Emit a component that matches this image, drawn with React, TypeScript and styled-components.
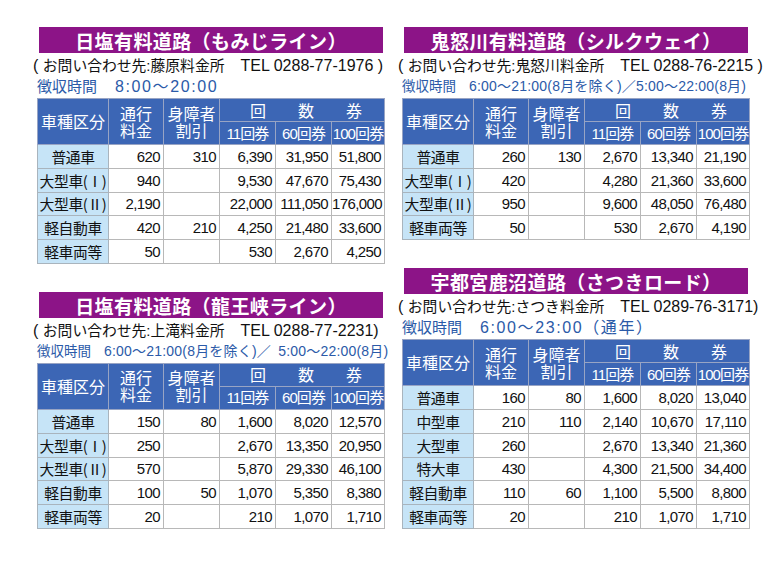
import React from "react";
import styled, { createGlobalStyle } from "styled-components";

const GlobalStyle = createGlobalStyle`
  html, body { margin: 0; padding: 0; background: #ffffff; }
  body {
    font-family: "Liberation Sans", "Noto Sans CJK JP", sans-serif;
    color: #111111;
  }
`;

const Page = styled.div`
  display: flex;
  gap: 18px;
  padding: 27px 0 0 37px;
  width: 780px;
  height: 564px;
  box-sizing: border-box;
`;

const Column = styled.div`
  display: flex;
  flex-direction: column;
  gap: 28px;
  width: 347px;
`;

const Block = styled.section`
  display: flex;
  flex-direction: column;
`;

const Title = styled.h2`
  margin: 0 1px 0 2px;
  height: 26px;
  line-height: 27px;
  background: #8c1487;
  color: #ffffff;
  font-family: "Noto Sans CJK JP", sans-serif;
  font-weight: 700;
  font-size: 19px;
  letter-spacing: 0.4px;
  text-align: center;
  white-space: nowrap;
`;

const Contact = styled.div`
  margin: 2px 0 0 -4px;
  height: 21px;
  line-height: 21px;
  font-size: 16px;
  white-space: nowrap;
  color: #111111;
`;

const Jp = styled.span`
  font-size: 14.8px;
`;

const Hours = styled.div<{ $compact?: boolean }>`
  height: 21px;
  line-height: 21px;
  color: #2b5aa8;
  white-space: nowrap;
  font-size: ${(p) => (p.$compact ? "14px" : "16px")};
  letter-spacing: ${(p) => (p.$compact ? "0.2px" : "1.6px")};
  margin-bottom: 1px;
`;

const HoursLabel = styled.span<{ $compact?: boolean }>`
  font-size: ${(p) => (p.$compact ? "13.5px" : "15px")};
  letter-spacing: 0;
  margin-right: ${(p) => (p.$compact ? "13px" : "18px")};
`;

const Table = styled.table`
  border-collapse: collapse;
  table-layout: fixed;
  width: 347px;
  border: 1px solid #9a9a9a;
`;

const Th = styled.th`
  background: #3c66b5;
  color: #ffffff;
  font-family: "Noto Sans CJK JP", sans-serif;
  font-weight: 400;
  font-size: 16px;
  line-height: 17px;
  border: 1px solid #98a4c4;
  padding: 0;
  height: 22px;
  text-align: center;
  vertical-align: middle;
`;

const SubTh = styled(Th)`
  font-size: 15px;
  height: 22px;
  letter-spacing: -0.9px;
  white-space: nowrap;
  font-family: "Liberation Sans", "Noto Sans CJK JP", sans-serif;
`;

const Spread = styled.div`
  display: flex;
  justify-content: center;
  gap: 32px;
  padding-left: 8px;
`;

const NameCell = styled.td`
  background: #c6e4f7;
  font-family: "Noto Sans CJK JP", sans-serif;
  font-size: 14.8px;
  text-align: center;
  border: 1px solid #a9b4bd;
  height: 22.8px;
  padding: 0;
  white-space: nowrap;
  letter-spacing: -0.4px;
`;

const NumCell = styled.td`
  font-size: 15px;
  letter-spacing: -0.6px;
  text-align: right;
  padding: 0 3px 0 0;
  border: 1px solid #b8b8b8;
  height: 22.8px;
  white-space: nowrap;
`;

type Row = [string, string, string, string, string, string];

const FareTable = ({ rows }: { rows: Row[] }) => (
  <Table>
    <colgroup>
      <col style={{ width: 71 }} />
      <col style={{ width: 55 }} />
      <col style={{ width: 56 }} />
      <col style={{ width: 56 }} />
      <col style={{ width: 56 }} />
      <col style={{ width: 53 }} />
    </colgroup>
    <thead>
      <tr>
        <Th rowSpan={2}>車種区分</Th>
        <Th rowSpan={2}>
          通行
          <br />
          料金
        </Th>
        <Th rowSpan={2}>
          身障者
          <br />
          割引
        </Th>
        <Th colSpan={3}>
          <Spread>
            <span>回</span>
            <span>数</span>
            <span>券</span>
          </Spread>
        </Th>
      </tr>
      <tr>
        <SubTh>11回券</SubTh>
        <SubTh>60回券</SubTh>
        <SubTh>100回券</SubTh>
      </tr>
    </thead>
    <tbody>
      {rows.map((r) => (
        <tr key={r[0]}>
          <NameCell>{r[0]}</NameCell>
          <NumCell>{r[1]}</NumCell>
          <NumCell>{r[2]}</NumCell>
          <NumCell>{r[3]}</NumCell>
          <NumCell>{r[4]}</NumCell>
          <NumCell>{r[5]}</NumCell>
        </tr>
      ))}
    </tbody>
  </Table>
);

const momiji: Row[] = [
  ["普通車", "620", "310", "6,390", "31,950", "51,800"],
  ["大型車(Ⅰ)", "940", "", "9,530", "47,670", "75,430"],
  ["大型車(Ⅱ)", "2,190", "", "22,000", "111,050", "176,000"],
  ["軽自動車", "420", "210", "4,250", "21,480", "33,600"],
  ["軽車両等", "50", "", "530", "2,670", "4,250"],
];

const ryuokyo: Row[] = [
  ["普通車", "150", "80", "1,600", "8,020", "12,570"],
  ["大型車(Ⅰ)", "250", "", "2,670", "13,350", "20,950"],
  ["大型車(Ⅱ)", "570", "", "5,870", "29,330", "46,100"],
  ["軽自動車", "100", "50", "1,070", "5,350", "8,380"],
  ["軽車両等", "20", "", "210", "1,070", "1,710"],
];

const silk: Row[] = [
  ["普通車", "260", "130", "2,670", "13,340", "21,190"],
  ["大型車(Ⅰ)", "420", "", "4,280", "21,360", "33,600"],
  ["大型車(Ⅱ)", "950", "", "9,600", "48,050", "76,480"],
  ["軽車両等", "50", "", "530", "2,670", "4,190"],
];

const satsuki: Row[] = [
  ["普通車", "160", "80", "1,600", "8,020", "13,040"],
  ["中型車", "210", "110", "2,140", "10,670", "17,110"],
  ["大型車", "260", "", "2,670", "13,340", "21,360"],
  ["特大車", "430", "", "4,300", "21,500", "34,400"],
  ["軽自動車", "110", "60", "1,100", "5,500", "8,800"],
  ["軽車両等", "20", "", "210", "1,070", "1,710"],
];

type SectionProps = {
  title: string;
  office: string;
  tel: string;
  closeSpace?: boolean;
  hours: string;
  compact?: boolean;
  rows: Row[];
};

const Section = ({ title, office, tel, closeSpace, hours, compact, rows }: SectionProps) => (
  <Block>
    <Title>{title}</Title>
    <Contact>
      {"( "}
      <Jp>お問い合わせ先:{office}</Jp>
      {"　TEL " + tel + (closeSpace ? " )" : ")")}
    </Contact>
    <Hours $compact={compact}>
      <HoursLabel $compact={compact}>徴収時間</HoursLabel>
      {hours}
    </Hours>
    <FareTable rows={rows} />
  </Block>
);

export default function App() {
  return (
    <>
      <GlobalStyle />
      <Page>
        <Column>
          <Section
            title="日塩有料道路（もみじライン）"
            office="藤原料金所"
            tel="0288-77-1976"
            closeSpace
            hours="8:00～20:00"
            rows={momiji}
          />
          <Section
            title="日塩有料道路（龍王峡ライン）"
            office="上滝料金所"
            tel="0288-77-2231"
            hours={"6:00～21:00(8月を除く)／\u20025:00～22:00(8月)"}
            compact
            rows={ryuokyo}
          />
        </Column>
        <Column>
          <Section
            title="鬼怒川有料道路（シルクウェイ）"
            office="鬼怒川料金所"
            tel="0288-76-2215"
            closeSpace
            hours="6:00～21:00(8月を除く)／5:00～22:00(8月)"
            compact
            rows={silk}
          />
          <Section
            title="宇都宮鹿沼道路（さつきロード）"
            office="さつき料金所"
            tel="0289-76-3171"
            hours="6:00～23:00（通年）"
            rows={satsuki}
          />
        </Column>
      </Page>
    </>
  );
}
